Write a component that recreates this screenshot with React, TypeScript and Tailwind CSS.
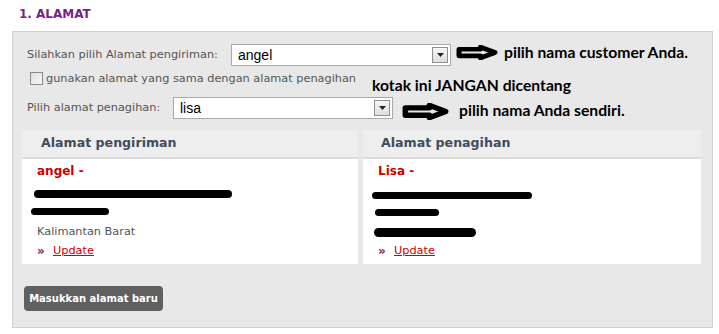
import React from 'react';

const Arrow = ({ w, h }: { w: number; h: number }) => (
  <svg width={w} height={h} viewBox="0 0 42 16" preserveAspectRatio="none">
    <polygon
      points="3,4.5 24.5,4.5 24.5,2.2 39,8 24.5,13.8 24.5,11.5 3,11.5"
      fill="#e8e8e8"
      stroke="#000"
      strokeWidth="5"
      strokeLinejoin="round"
    />
  </svg>
);

const Select = ({ value, width }: { value: string; width: string }) => (
  <div className={`${width} h-[22px] bg-white border border-[#a9a9a9] flex items-center justify-between pl-[6px] pr-[2px]`}>
    <span className="text-[14px] text-black" style={{ fontFamily: '"Liberation Sans", Arial, sans-serif' }}>{value}</span>
    <div className="w-[16px] h-[16px] border border-[#8e8e8e] bg-gradient-to-b from-[#f7f7f7] to-[#dedede] flex items-center justify-center">
      <svg width="7" height="4" viewBox="0 0 7 4"><polygon points="0,0 7,0 3.5,4" fill="#222" /></svg>
    </div>
  </div>
);

const Bar = ({ left, width, top, h, rowH = 19 }: { left: number; width: number; top: number; h: number; rowH?: number }) => (
  <div className="flex items-start" style={{ height: rowH }}>
    <div
      className="bg-black rounded-full"
      style={{ marginLeft: left, width, marginTop: top, height: h }}
    />
  </div>
);

const UpdateLink = () => (
  <div className="flex items-center h-[18px] text-[11.3px]">
    <span className="text-[#8b1e4b] font-bold text-[12px] w-[16px] leading-none">»</span>
    <a className="text-[#cc0000] underline">Update</a>
  </div>
);

const annot = { fontFamily: 'Lato, "Open Sans", sans-serif' };

export default function App() {
  return (
    <div className="w-[719px] h-[334px] bg-white text-[11.3px] text-[#555]" style={{ fontFamily: '"DejaVu Sans", Verdana, sans-serif' }}>
      <div className="h-[31px] pl-[19px] pt-[5px] text-[12px] font-bold text-[#7a1f8a]">1. ALAMAT</div>

      <div className="ml-[12px] w-[701px] h-[297px] border border-[#d0d0d0] bg-[#e8e8e8] pt-[12px]">
        <div className="flex items-center h-[22px] pl-[14px]">
          <span className="w-[204px]">Silahkan pilih Alamat pengiriman:</span>
          <Select value="angel" width="w-[220px]" />
          <div className="ml-[5px] mt-[-6px]"><Arrow w={42} h={15} /></div>
          <span className="ml-[6px] mt-[-5px] text-[15.7px] font-bold text-black" style={annot}>pilih nama customer Anda.</span>
        </div>

        <div className="flex items-start h-[31px] pl-[17px] pt-[5px]">
          <div className="w-[13px] h-[13px] border border-[#8a8a8a] bg-gradient-to-br from-[#dcdcdc] to-[#fafafa] mt-[1px]" />
          <span className="ml-[3px]">gunakan alamat yang sama dengan alamat penagihan</span>
          <span className="ml-[16px] mt-[3px] text-[15.7px] font-bold text-black" style={annot}>kotak ini JANGAN dicentang</span>
        </div>

        <div className="flex items-center h-[22px] pl-[14px]">
          <span className="w-[146px]">Pilih alamat penagihan:</span>
          <Select value="lisa" width="w-[220px]" />
          <div className="ml-[9px] mt-[6px]"><Arrow w={47} h={17} /></div>
          <span className="ml-[10px] mt-[5px] text-[15.7px] font-bold text-black" style={annot}>pilih nama Anda sendiri.</span>
        </div>

        <div className="flex gap-[5px] pl-[9px] mt-[11px]">
          <div className="w-[336px]">
            <div className="h-[29px] bg-[#eeeeee] border-b-[2px] border-[#dcdcdc] pl-[19px] pt-[4px] text-[12.6px] font-bold text-[#3f4d5d]">Alamat pengiriman</div>
            <div className="h-[105px] bg-white pl-[15px] pt-[3px]">
              <div className="h-[19px] text-[12px] font-bold text-[#cc0000]">angel -</div>
              <Bar left={-3} width={198} top={9} h={8} />
              <Bar left={-6} width={78} top={8} h={7} />
              <div className="h-[23px] pt-[5px]">Kalimantan Barat</div>
              <UpdateLink />
            </div>
          </div>
          <div className="w-[338px]">
            <div className="h-[29px] bg-[#eeeeee] border-b-[2px] border-[#dcdcdc] pl-[18px] pt-[4px] text-[12.6px] font-bold text-[#3f4d5d]">Alamat penagihan</div>
            <div className="h-[105px] bg-white pl-[15px] pt-[3px]">
              <div className="h-[19px] text-[12px] font-bold text-[#cc0000]">Lisa -</div>
              <Bar left={-6} width={160} top={11} h={7} />
              <Bar left={-3} width={64} top={9} h={7} />
              <Bar left={-4} width={102} top={9} h={9} rowH={23} />
              <UpdateLink />
            </div>
          </div>
        </div>

        <button className="ml-[11px] mt-[22px] w-[139px] h-[25px] bg-[#606060] rounded-[4px] text-white text-[10px] font-bold">
          Masukkan alamat baru
        </button>
      </div>
    </div>
  );
}
